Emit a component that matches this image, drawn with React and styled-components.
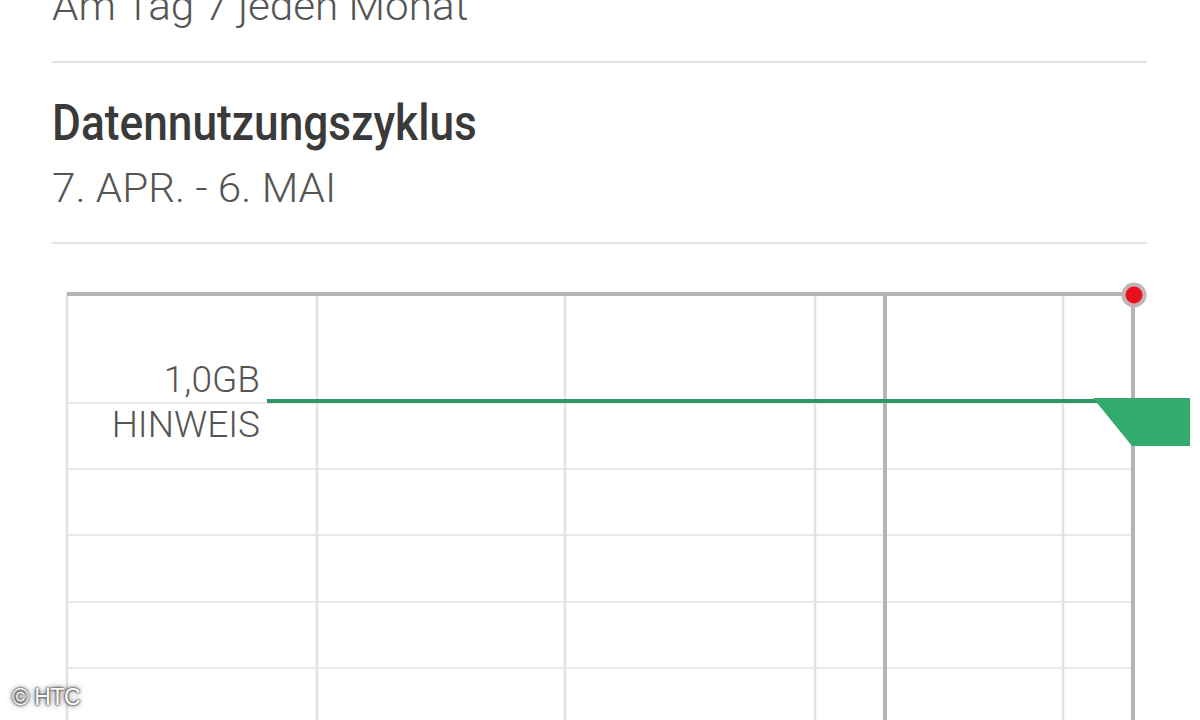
import React from "react";
import styled, { createGlobalStyle } from "styled-components";

const Global = createGlobalStyle`
  html, body { margin: 0; padding: 0; background: #fff; overflow: hidden; }
  body { font-family: Roboto, "Noto Sans", sans-serif; }
`;

const Screen = styled.div`
  width: 1200px;
  height: 720px;
  overflow: hidden;
  position: relative;
  background: #fff;
`;

const Page = styled.div`
  margin-top: -18px;
  padding: 0 53px 0 52px;
`;

const Item = styled.div`
  padding-top: ${(p) => p.$top}px;
  padding-bottom: ${(p) => p.$bottom}px;
  border-bottom: 2px solid #e3e3e3;
  display: flex;
  flex-direction: column;
  gap: ${(p) => p.$gap || 0}px;
`;

const Title = styled.div`
  font-family: Roboto, sans-serif;
  font-weight: 500;
  font-size: 50px;
  line-height: 58px;
  color: #3a3a3a;
  transform: scaleX(0.885);
  transform-origin: left center;
  white-space: nowrap;
`;

const Summary = styled.div`
  font-family: Roboto, sans-serif;
  font-weight: 300;
  font-size: 41px;
  line-height: 48px;
  color: #555;
  transform: scaleX(1.03);
  transform-origin: left center;
  white-space: nowrap;
`;

const Chart = styled.div`
  position: relative;
  margin: 0 -53px 0 -52px;
  height: 480px;
`;

const Labels = styled.div`
  position: absolute;
  right: 940px;
  top: 113px;
  text-align: right;
  font-family: Roboto, sans-serif;
  font-weight: 300;
  font-size: 37px;
  line-height: 45px;
  color: #555;
`;

const Watermark = styled.div`
  position: absolute;
  left: 12px;
  bottom: 9px;
  font-family: "Liberation Sans", Arial, sans-serif;
  font-size: 23px;
  color: #fff;
  text-shadow: 0 0 2px #333, 0 0 3px #333, 0 0 6px rgba(0,0,0,0.6);
  letter-spacing: -0.5px;
`;

const OY = 244;
const y = (v) => v - OY;

function UsageChart() {
  const thinV = [67, 317, 565, 815, 1063];
  const thinH = [403, 469, 535, 602, 668, 734];
  return (
    <Chart>
      <svg width="1200" height="480" viewBox="0 0 1200 480">
        {thinH.map((h) => (
          <line key={"h" + h} x1="67" x2="1133" y1={y(h)} y2={y(h)} stroke="#e9e9e9" strokeWidth="2" />
        ))}
        {thinV.map((v) => (
          <line key={"v" + v} x1={v} x2={v} y1={y(294)} y2="480" stroke="#e2e2e2" strokeWidth="2.5" />
        ))}
        <line x1="885" x2="885" y1={y(294)} y2="480" stroke="#b4b4b4" strokeWidth="4" />
        <line x1="1133" x2="1133" y1={y(294)} y2="480" stroke="#b4b4b4" strokeWidth="4" />
        <line x1="67" x2="1133" y1={y(294)} y2={y(294)} stroke="#b4b4b4" strokeWidth="4" />
        <line x1="267" x2="1100" y1={y(401)} y2={y(401)} stroke="#2e9763" strokeWidth="4" />
        <polygon
          points={`1093,${y(398)} 1190,${y(398)} 1190,${y(446)} 1132,${y(446)}`}
          fill="#33ab6c"
        />
        <circle cx="1134" cy={y(295)} r="12.5" fill="#c6b4b4" />
        <circle cx="1134" cy={y(295)} r="8.5" fill="#e8121c" />
      </svg>
      <Labels>
        <div>1,0GB</div>
        <div>HINWEIS</div>
      </Labels>
    </Chart>
  );
}

export default function App() {
  return (
    <Screen>
      <Global />
      <Page>
        <Item $top={0} $bottom={31}>
          <Summary>Am Tag 7 jeden Monat</Summary>
        </Item>
        <Item $top={31} $bottom={30} $gap={12}>
          <Title>Datennutzungszyklus</Title>
          <Summary>7. APR. - 6. MAI</Summary>
        </Item>
        <UsageChart />
      </Page>
      <Watermark>© HTC</Watermark>
    </Screen>
  );
}
